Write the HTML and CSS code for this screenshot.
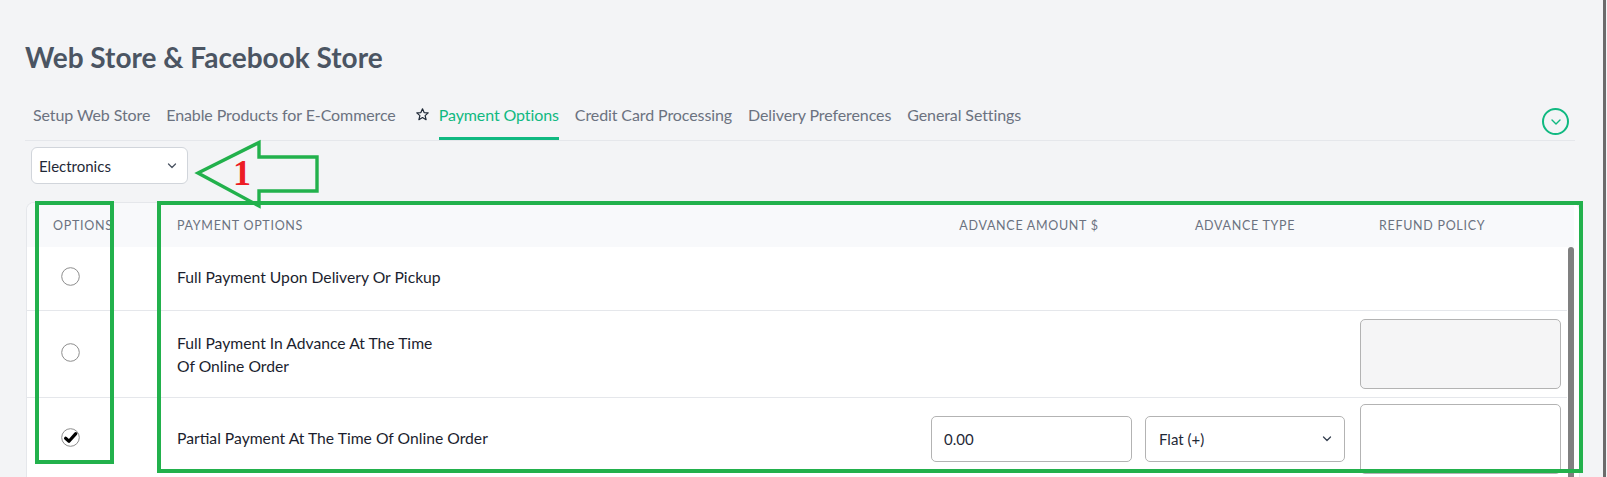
FILE: index.html
```html
<!DOCTYPE html>
<html lang="en">
<head>
<meta charset="utf-8">
<title>Web Store &amp; Facebook Store</title>
<link rel="stylesheet" href="styles.css">
</head>
<body>
<div class="page">
  <h1 class="title">Web Store &amp; Facebook Store</h1>

  <div class="tabbar">
    <nav class="tabs">
      <a class="tab">Setup Web Store</a>
      <a class="tab">Enable Products for E-Commerce</a>
      <span class="tab-star">
        <svg width="13" height="13" viewBox="0 0 13 13"><polygon points="6.5,0.8 8.1,4.6 12.2,4.9 9.1,7.6 10.1,11.7 6.5,9.5 2.9,11.7 3.9,7.6 0.8,4.9 4.9,4.6" fill="none" stroke="#1f2937" stroke-width="1.2" stroke-linejoin="round"/></svg>
      </span>
      <a class="tab active">Payment Options</a>
      <a class="tab">Credit Card Processing</a>
      <a class="tab">Delivery Preferences</a>
      <a class="tab">General Settings</a>
    </nav>
    <span class="collapse-btn">
      <svg width="12" height="8" viewBox="0 0 12 8"><polyline points="2,2 6,6 10,2" fill="none" stroke="#10b981" stroke-width="1.4" stroke-linecap="round" stroke-linejoin="round"/></svg>
    </span>
  </div>

  <div class="store-select">
    <span>Electronics</span>
    <svg width="10" height="6" viewBox="0 0 10 6"><polyline points="1.5,1 5,4.5 8.5,1" fill="none" stroke="#4b5563" stroke-width="1.3" stroke-linecap="round" stroke-linejoin="round"/></svg>
  </div>

  <div class="card">
    <div class="thead">
      <div class="th th-opt">Options</div>
      <div class="th th-pay">Payment Options</div>
      <div class="th th-center">Advance Amount $</div>
      <div class="th th-center">Advance Type</div>
      <div class="th th-refund">Refund Policy</div>
      <div></div>
    </div>
    <div class="tbody">
      <div class="rows">
        <div class="row row-1">
          <div class="cell-radio">
            <svg class="radio" width="19" height="19" viewBox="0 0 19 19"><circle cx="9.5" cy="9.5" r="8.8" fill="#fff" stroke="#8d8d8d" stroke-width="1"/></svg>
          </div>
          <div class="cell-label">Full Payment Upon Delivery Or Pickup</div>
          <div></div><div></div><div></div>
        </div>
        <div class="row row-2">
          <div class="cell-radio">
            <svg class="radio" width="19" height="19" viewBox="0 0 19 19"><circle cx="9.5" cy="9.5" r="8.8" fill="#fff" stroke="#8d8d8d" stroke-width="1"/></svg>
          </div>
          <div class="cell-label cell-label-wrap">Full Payment In Advance At The Time<br>Of Online Order</div>
          <div></div><div></div>
          <div class="cell-refund"><div class="textarea disabled"></div></div>
        </div>
        <div class="row row-3">
          <div class="cell-radio">
            <svg class="radio" width="19" height="19" viewBox="0 0 19 19"><circle cx="9.5" cy="9.5" r="8.8" fill="#fff" stroke="#8d8d8d" stroke-width="1"/><path d="M4.6 10.2 L8 13.2 L14.8 5.6" fill="none" stroke="#000" stroke-width="3.2" stroke-linecap="round" stroke-linejoin="round"/></svg>
          </div>
          <div class="cell-label">Partial Payment At The Time Of Online Order</div>
          <div class="cell-amount"><div class="field">0.00</div></div>
          <div class="cell-type">
            <div class="field field-select">
              <span>Flat (+)</span>
              <svg width="10" height="6" viewBox="0 0 10 6"><polyline points="1.5,1 5,4.5 8.5,1" fill="none" stroke="#374151" stroke-width="1.3" stroke-linecap="round" stroke-linejoin="round"/></svg>
            </div>
          </div>
          <div class="cell-refund"><div class="textarea"></div></div>
        </div>
      </div>
      <div class="scroll-track"><div class="scroll-thumb"></div></div>
    </div>
  </div>
</div>

<svg class="annotations" width="1607" height="477" viewBox="0 0 1607 477">
  <rect x="37" y="203" width="75" height="259" fill="none" stroke="#22b14c" stroke-width="4"/>
  <rect x="159" y="203" width="1422" height="268" fill="none" stroke="#22b14c" stroke-width="4"/>
  <polygon points="198,173 259,142.5 259,157 317,157 317,191 259,191 259,206" fill="none" stroke="#22b14c" stroke-width="3.4" stroke-linejoin="miter"/>
  <text x="233" y="185" class="anno-num">1</text>
</svg>
<div class="page-scrollbar"></div>
</body>
</html>
```

FILE: styles.css
```css
* { box-sizing: border-box; }

html, body {
  margin: 0;
  padding: 0;
}

body {
  width: 1607px;
  height: 477px;
  overflow: hidden;
  background: #f3f4f6;
  font-family: Lato, "Noto Sans", sans-serif;
  position: relative;
}

.page {
  padding: 40px 32px 0 25px;
}

.title {
  margin: 0;
  font-size: 28px;
  line-height: 35px;
  font-weight: 700;
  color: #4b5563;
}

.tabbar {
  display: flex;
  align-items: flex-end;
  justify-content: space-between;
  height: 66px;
  border-bottom: 1px solid #e5e7eb;
}

.tabs {
  display: flex;
  align-items: flex-end;
}

.tab {
  display: block;
  margin: 0 8px;
  padding: 9px 0 12px;
  line-height: 20px;
  font-size: 16px;
  letter-spacing: -0.1px;
  color: #6b7280;
  border-bottom: 3px solid transparent;
  white-space: nowrap;
}

.tab.active {
  color: #10b981;
  border-bottom-color: #10b981;
}

.tab-star {
  display: flex;
  align-items: center;
  height: 44px;
  padding: 0 2px 7px 12px;
}

.collapse-btn {
  width: 27px;
  height: 27px;
  border: 2px solid #10b981;
  border-radius: 50%;
  display: flex;
  align-items: center;
  justify-content: center;
  margin: 0 6px 5px 0;
}

.store-select {
  margin: 6px 0 0 6px;
  width: 157px;
  height: 37px;
  background: #fff;
  border: 1px solid #d1d5db;
  border-radius: 6px;
  display: flex;
  align-items: center;
  justify-content: space-between;
  padding: 0 10px 0 7px;
  font-size: 15px;
  color: #1f2937;
}

.card {
  margin: 18px 0 0 1px;
  width: 1554px;
  background: #fff;
  border: 1px solid #e5e7eb;
  border-bottom: none;
  border-radius: 8px 8px 0 0;
  padding-right: 5px;
  overflow: hidden;
}

.thead {
  display: grid;
  grid-template-columns: 133px 760px 218px 214px 215px 7px;
  height: 44px;
  align-items: center;
  background: #f8f9fb;
  font-size: 12.5px;
  letter-spacing: 0.7px;
  text-transform: uppercase;
  color: #6b7280;
}

.th { white-space: nowrap; }
.th-opt { padding-left: 26px; }
.th-pay { padding-left: 17px; }
.th-center { text-align: center; }
.th-refund { padding-left: 27px; }

.tbody {
  display: flex;
}

.rows {
  width: 1540px;
}

.row {
  display: grid;
  grid-template-columns: 133px 760px 218px 214px 215px;
  align-items: center;
  border-bottom: 1px solid #e5e7eb;
}

.row-1 { height: 64px; }
.row-2 { height: 87px; }
.row-3 { height: 82px; border-bottom: none; }

.cell-radio {
  display: flex;
  align-items: center;
  padding-left: 34px;
}

.radio {
  display: block;
  margin-bottom: 4px;
}

.cell-label {
  padding-left: 17px;
  font-size: 15.7px;
  line-height: 23px;
  color: #1b1e2e;
  margin-bottom: 2px;
}

.cell-label-wrap {
  margin-bottom: 0;
  margin-top: 2px;
}

.cell-amount { padding-left: 11px; }
.cell-type { padding-left: 7px; }
.cell-refund { padding-left: 8px; }

.field {
  height: 46px;
  width: 201px;
  border: 1px solid #b3b3b3;
  border-radius: 5px;
  background: #fff;
  display: flex;
  align-items: center;
  padding: 0 12px;
  font-size: 15px;
  color: #1f2937;
}

.field-select {
  width: 200px;
  justify-content: space-between;
  padding: 0 12px 0 13px;
}

.textarea {
  width: 201px;
  height: 70px;
  border: 1px solid #b3b3b3;
  border-radius: 5px;
  background: #fff;
}

.textarea.disabled {
  background: #f5f5f6;
}

.scroll-track {
  width: 7px;
}

.scroll-thumb {
  margin-left: 1px;
  width: 6px;
  height: 260px;
  background: #808080;
  border-radius: 3px 3px 0 0;
}

.annotations {
  position: absolute;
  top: 0;
  left: 0;
  pointer-events: none;
}

.anno-num {
  font-family: "Liberation Serif", serif;
  font-weight: 700;
  font-size: 36px;
  fill: #ed1c24;
}

.page-scrollbar {
  position: absolute;
  top: 0;
  right: 1px;
  width: 3px;
  height: 477px;
  background: #6b6b6b;
}
```
